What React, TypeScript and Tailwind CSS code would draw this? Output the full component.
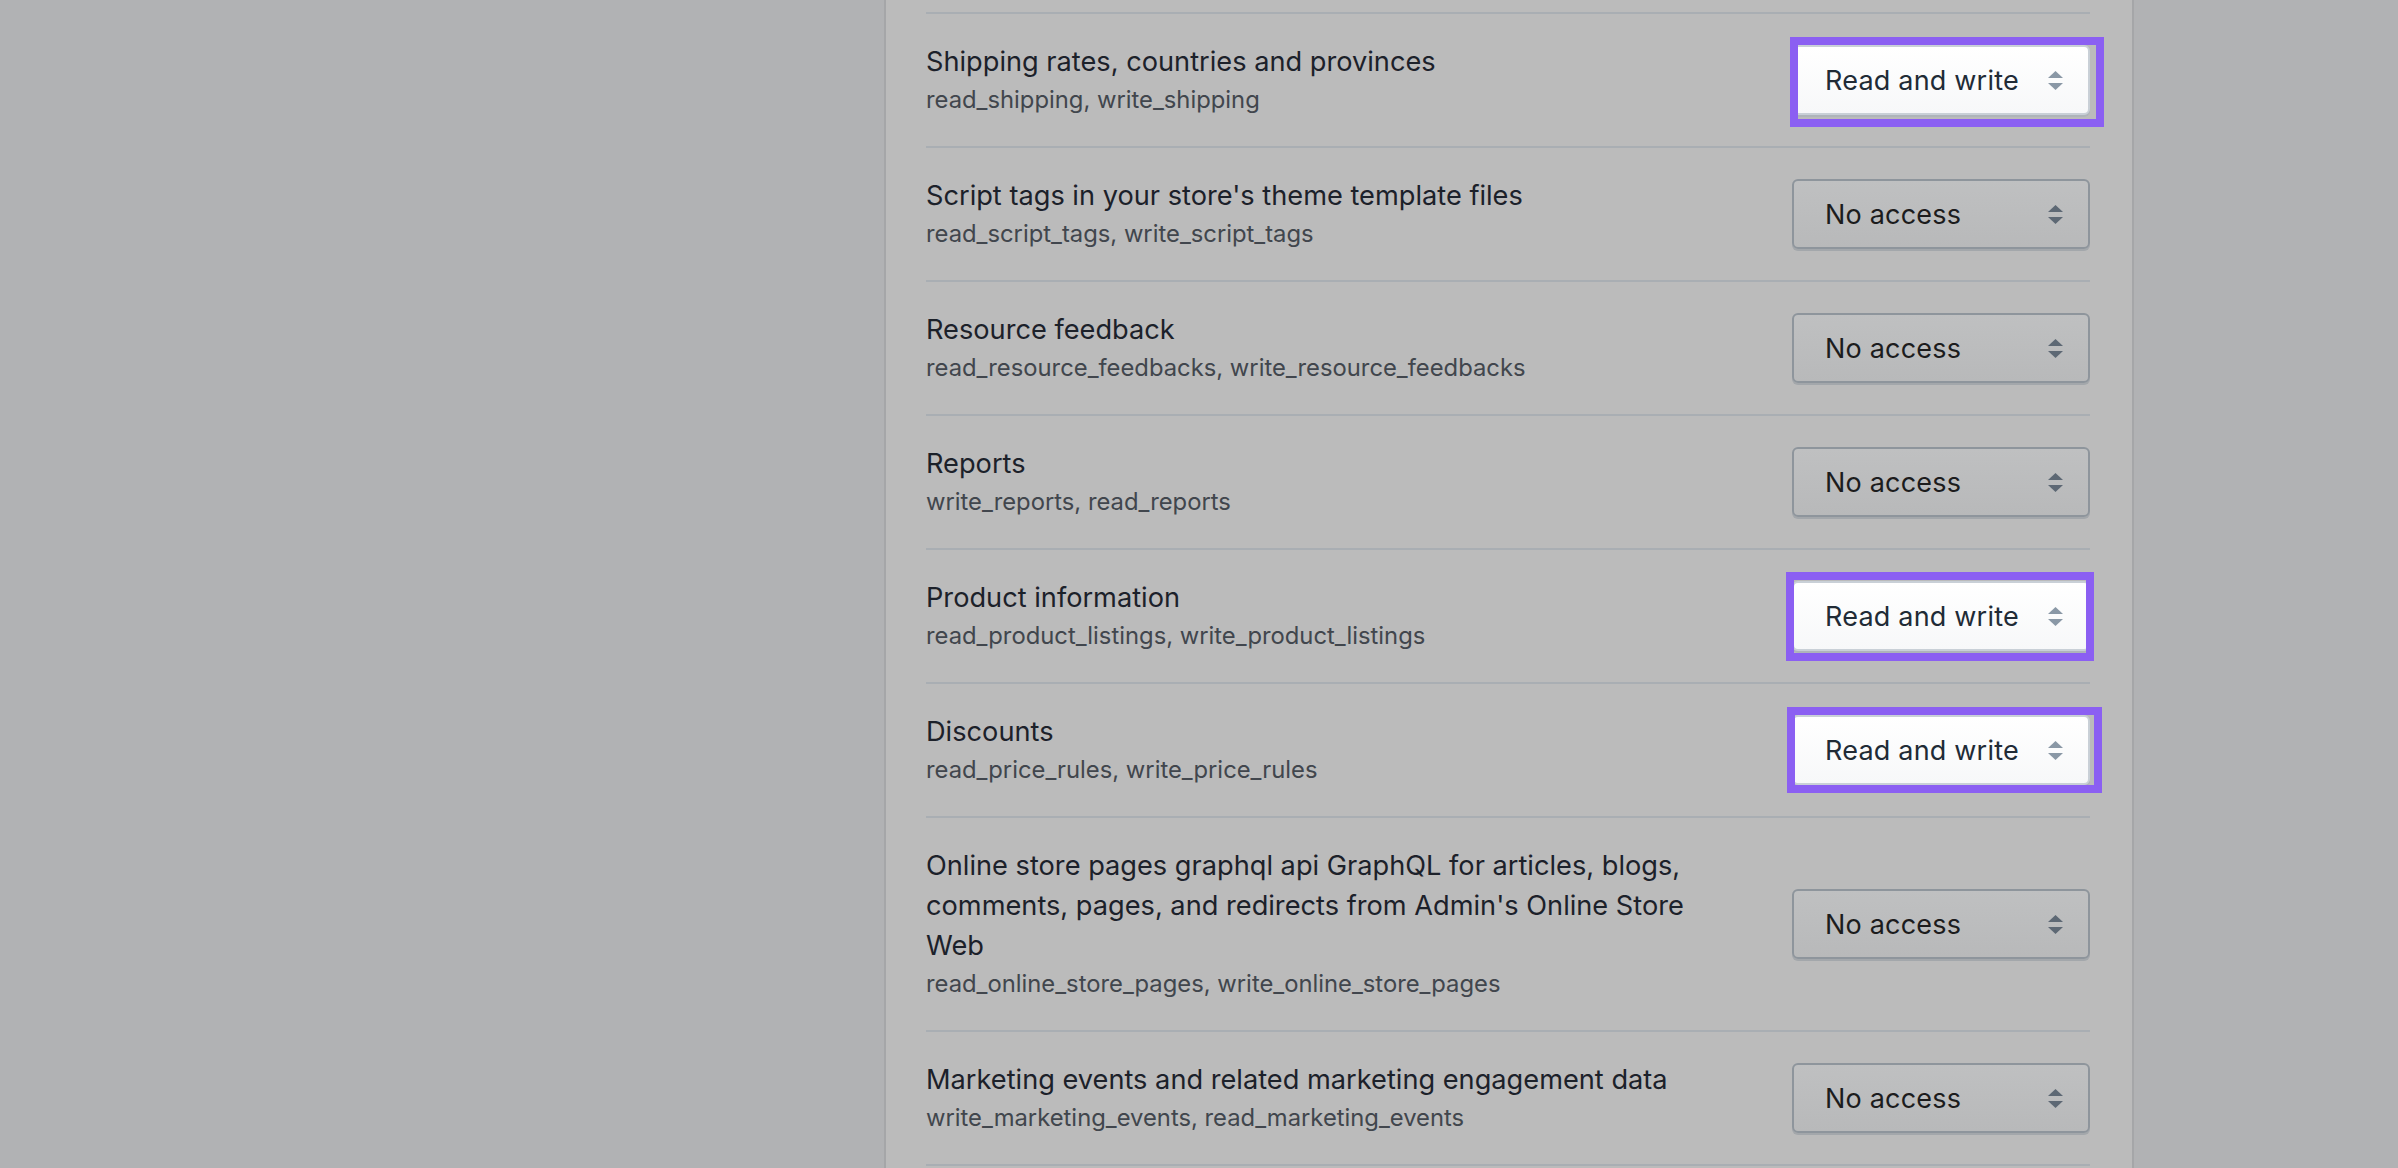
import React from 'react'

type Scope = {
  title: string
  scopes: string
  value: string
  // annotation box offsets around the select: [top, right, bottom, left]
  mark?: [number, number, number, number]
}

const rows: Scope[] = [
  { title: 'Shipping rates, countries and provinces', scopes: 'read_shipping, write_shipping', value: 'Read and write', mark: [8, 14, 12, 2] },
  { title: "Script tags in your store's theme template files", scopes: 'read_script_tags, write_script_tags', value: 'No access' },
  { title: 'Resource feedback', scopes: 'read_resource_feedbacks, write_resource_feedbacks', value: 'No access' },
  { title: 'Reports', scopes: 'write_reports, read_reports', value: 'No access' },
  { title: 'Product information', scopes: 'read_product_listings, write_product_listings', value: 'Read and write', mark: [9, 4, 10, 6] },
  { title: 'Discounts', scopes: 'read_price_rules, write_price_rules', value: 'Read and write', mark: [8, 12, 8, 5] },
  {
    title: "Online store pages graphql api GraphQL for articles, blogs, comments, pages, and redirects from Admin's Online Store Web",
    scopes: 'read_online_store_pages, write_online_store_pages',
    value: 'No access',
  },
  { title: 'Marketing events and related marketing engagement data', scopes: 'write_marketing_events, read_marketing_events', value: 'No access' },
]

function Arrows({ light }: { light: boolean }) {
  return (
    <svg width="15" height="21" viewBox="0 0 15 21" className={light ? 'fill-[#8a98a6]' : 'fill-[#5d6874]'}>
      <path d="M7.5 1 L15 8 L0 8 Z" />
      <path d="M0 13 L15 13 L7.5 20 Z" />
    </svg>
  )
}

function Select({ value, mark }: { value: string; mark?: [number, number, number, number] }) {
  const light = !!mark
  return (
    <div className="relative shrink-0">
      <div
        className={
          light
            ? 'flex h-[70px] w-[298px] items-center justify-between rounded-[6px] border-2 border-[#c9d0d7] bg-gradient-to-b from-white to-[#f7f8f9] pl-[31px] pr-[25px] text-[#212b36] shadow-[0_2px_0_#aeb4ba]'
            : 'flex h-[70px] w-[298px] items-center justify-between rounded-[6px] border-2 border-[#8e959c] bg-gradient-to-b from-[#bfc0c1] to-[#b8b9ba] pl-[31px] pr-[25px] text-[#1c1c1d] shadow-[0_2px_0_#a3a7ab]'
        }
      >
        <span className="text-[27px] leading-none tracking-[0.2px]">{value}</span>
        <Arrows light={light} />
      </div>
      {mark && (
        <div
          className="pointer-events-none absolute border-[8px] border-[#8b5ff2]"
          style={{ top: -mark[0], right: -mark[1], bottom: -mark[2], left: -mark[3] }}
        />
      )}
    </div>
  )
}

export default function App() {
  return (
    <div className="flex min-h-screen bg-[#b1b2b4] font-['Inter','Noto_Sans',sans-serif]">
      <div className="w-[884px] shrink-0" />
      <div className="h-[1168px] w-[1250px] shrink-0 overflow-hidden border-x-2 border-[#a5a6a8] bg-[#bbbbbb] pl-[40px] pr-[42px]">
        <div className="h-[12px]" />
        {rows.map((r) => (
          <div key={r.title} className="flex items-center justify-between border-t-2 border-[#a9aeb3] py-[28px]">
            <div className="max-w-[800px]">
              <div className="text-[27.2px] leading-[40px] text-[#1c212a]">{r.title}</div>
              <div className="text-[23.8px] leading-[36px] text-[#41464d]">{r.scopes}</div>
            </div>
            <Select value={r.value} mark={r.mark} />
          </div>
        ))}
        <div className="border-t-2 border-[#a9aeb3]" />
      </div>
    </div>
  )
}
